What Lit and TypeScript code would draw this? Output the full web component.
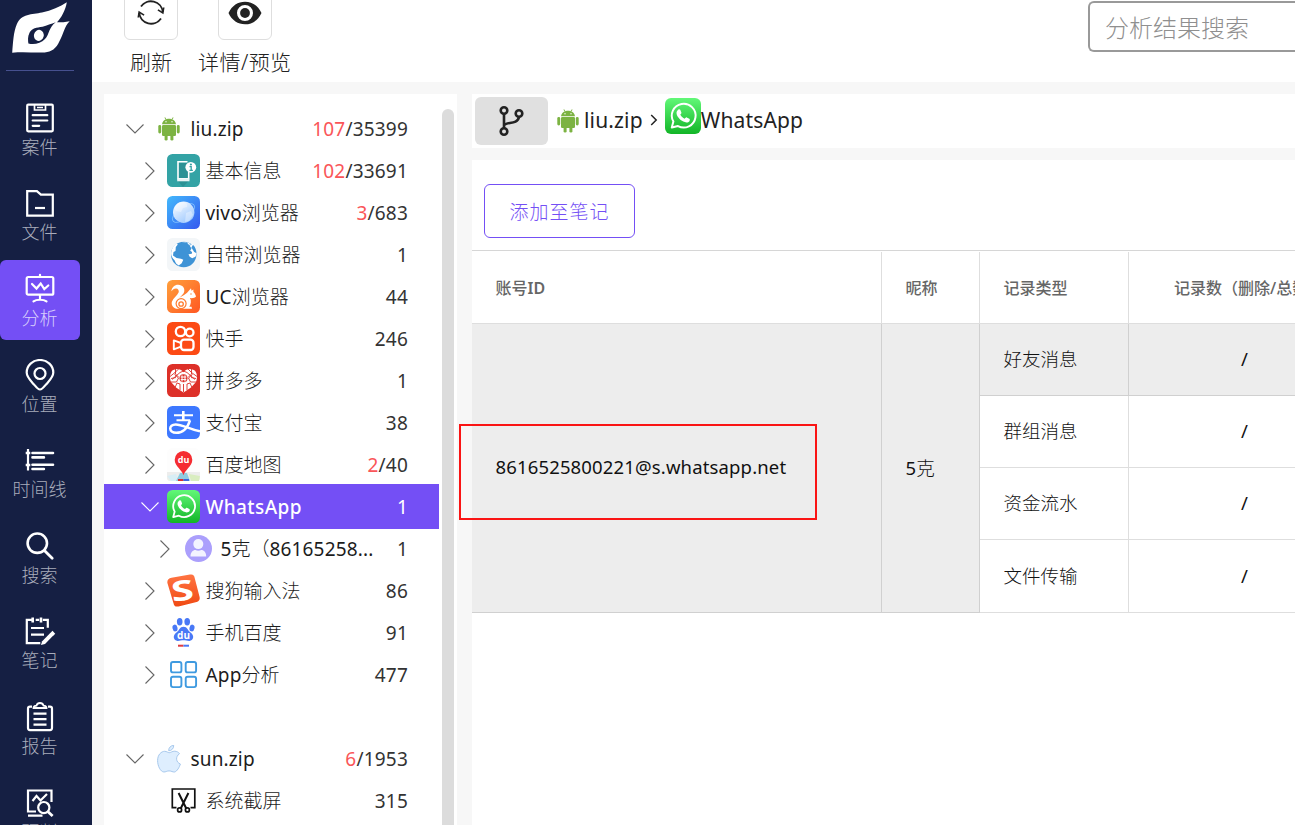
import { LitElement, html, svg, css, nothing } from "lit";
import { customElement } from "lit/decorators.js";
import { classMap } from "lit/directives/class-map.js";

const wrap = (w: number, h: number, vb: string, body: unknown) =>
  html`<svg width=${w} height=${h} viewBox=${vb} fill="none">${body}</svg>`;

// Han characters are set light, Latin letters and digits regular.
const mixed = (t: string) =>
  t.split(/([\x20-\x7e]+)/).filter(Boolean).map((p) => (/^[\x20-\x7e]/.test(p) ? html`<span class="latin">${p}</span>` : p));

const android = () => wrap(22, 24, "0 0 22 24", svg`<g fill="#7cb342"><path d="M4 7.2C4.300 4.600 6.200 3.100 7.700 2.500L6.400.7l.7-.5 1.400 2c1.600-.5 3.400-.5 5 0l1.400-2 .7.5-1.300 1.800C15.900 3.100 17.700 4.600 18 7.200z"/><rect x="4" y="8" width="14" height="11" rx="1.200"/><rect x=".3" y="8" width="2.900" height="8.500" rx="1.400"/><rect x="18.800" y="8" width="2.900" height="8.500" rx="1.400"/><rect x="6.600" y="17" width="3" height="6.600" rx="1.400"/><rect x="12.400" y="17" width="3" height="6.600" rx="1.400"/></g><circle cx="8" cy="4.800" r=".7" fill="#fff"/><circle cx="14" cy="4.800" r=".7" fill="#fff"/>`);

const apple = () => wrap(24, 28, "0 0 24 28", svg`<g fill="#deeefe" stroke="#9fc3ea" stroke-width=".9"><path d="M12.200 7.700c1.600-.1 3.100-1.600 5.600-1.500 2.100.1 3.700 1 4.700 2.500-4.300 2.800-3.700 8.600.9 10.300-.9 2.900-3.300 7.500-5.900 8-2 .2-2.900-1.100-5.400-1.100s-3.300 1.200-5.200 1.100C3.500 26.800.6 21 .6 15.600c0-6 3.700-9.200 7-9.300 2.100 0 3.400 1.400 4.600 1.400z"/><path d="M11.700 5.800c-.3-2.900 2-5.200 5-5.500.2 2.900-1.900 5.400-5 5.500z"/></g>`);

const whatsapp = (s: number) => wrap(s, s, "0 0 33 33", svg`<defs><linearGradient id="wa" x2="0" y2="1"><stop stop-color="#62f878"/><stop offset="1" stop-color="#12b527"/></linearGradient></defs><rect width="33" height="33" rx="5.500" fill="url(#wa)"/><path d="M6.200 27.100l1.500-5.500a10.900 10.900 0 1 1 4.200 4.100z" stroke="#fff" stroke-width="1.800" stroke-linejoin="round"/><path d="M12.300 10.600c.5-.5 1.400-.5 1.700.2l1 2.400c.2.500-.1 1-1 2 .9 1.900 2.300 3.100 4.100 3.900.8-1 1.300-1.500 1.800-1.300l2.400 1.200c.7.300.5 1.500.1 2.200-.8 1.100-2.600 1.500-4.200.9-3.700-1.200-6.600-4.200-7.500-7.200-.5-1.700.3-3.300 1.600-4.300z" fill="#fff"/>`);

const icons: Record<string, () => unknown> = {
  android,
  apple,
  whatsapp: () => whatsapp(33),
  info: () => wrap(33, 33, "0 0 33 33", svg`<rect width="33" height="33" rx="5.500" fill="#33a3a5"/><path d="M11 27l5 6 7-7.500V18l-2-9H11z" fill="#2c9295"/><path d="M20.500 7.700H11v17h10.700V18" stroke="#fff" stroke-width="1.600"/><path d="M10.200 24.600h12.300v2.700H10.200z" fill="#e8f5f5"/><circle cx="23.800" cy="13.300" r="5.400" fill="#fff"/><circle cx="23.900" cy="10.500" r="1.100" fill="#33a3a5"/><path d="M22.500 12.600h1.700v3.600m-1.800.1h3.500" stroke="#33a3a5" stroke-width="1.300"/>`),
  vivo: () => wrap(33, 33, "0 0 33 33", svg`<defs><linearGradient id="vv" x2="1" y2="1"><stop stop-color="#42b9fc"/><stop offset="1" stop-color="#3659ef"/></linearGradient><linearGradient id="vp" x2=".7" y2="1"><stop stop-color="#fff"/><stop offset="1" stop-color="#9ec9ff"/></linearGradient></defs><rect width="33" height="33" rx="5.500" fill="url(#vv)"/><ellipse cx="16.500" cy="17" rx="13.300" ry="6" transform="rotate(-38 16.500 17)" stroke="#86c4ff" stroke-width=".8"/><circle cx="16.700" cy="16.300" r="10.700" fill="url(#vp)"/><path d="M15 6c4 0 6 2 5 5l-4 1-2 4-5-1-2-3c1-3 4-6 8-6zM19 17l5-2 2 4-4 6-4 1z" fill="#fff" opacity=".35"/>`),
  globe: () => wrap(33, 33, "0 0 33 33", svg`<rect width="33" height="33" rx="5.500" fill="#f3f6f8"/><circle cx="16.700" cy="16.500" r="12.700" fill="#3e93d6"/><path d="M4.200 14.200c.6-3.600 2.500-6.700 5.300-8.600l1.300 1-2 2.400-.3 4-2 1-.5 3.500 3.600 2.500 4.400.8 2.300 1-1.600 3.500-3 2.300-2.600-2-1.700-3.700C5 20 3.800 17 4.200 14.200zM14.500 3.900c3.600-.4 6.800.4 9.300 2.400l-1.200 1.200 1.900 3-1.300 2.300 1.900 1.200-.3 1.800-3.300.4 1.200 2.600 2.500 1.400 3.200-1.400c.6-1.400 1-2.700 1.100-4.200.3-3.300-1.400-6.700-4-8.800l-1.900 1.500-2.400-1-1.100-1.800z" fill="#fff"/><path d="M26 6.800c2.300 2.200 3.500 5.300 3.400 8.500l-2.400-1.500-2.600-4.400z" fill="#3e93d6"/>`),
  uc: () => wrap(33, 33, "0 0 33 33", svg`<defs><linearGradient id="uc" x2="1" y2="1"><stop stop-color="#ffa03b"/><stop offset="1" stop-color="#ff5722"/></linearGradient></defs><rect width="33" height="33" rx="5.500" fill="url(#uc)"/><path d="M4.300 11.300C4.800 7 8 4.500 11.300 4.700c4.200.3 6.500 3 6 6.600-.4 2.700-3 4.700-5.200 6.600 3.500-2.300 6-3 8-5.100l3.900-4.500.5 2.500 1.900-1.200v2.400c1.300 1 2.200 2.700 2.600 4.400-1 1.500-3.500 2-6 1.600 1.500 2.500 1 6.500-.7 8.700h2.200l.5 2H9.200C5.500 27.600 4 24.300 5 21.500c1.300-3.400 5.500-6.200 6.700-9.300.5-2-.7-3.700-2.600-3.800-2-.1-3.300 1-4.800 2.900z" fill="#fff"/><circle cx="14.100" cy="23.600" r="5" stroke="#ff7a2c" stroke-width="1.200"/><circle cx="14.100" cy="24" r="2.200" stroke="#ff7a2c" stroke-width="1.300"/><circle cx="24" cy="14" r=".7" fill="#ff7a2c"/>`),
  kuaishou: () => wrap(33, 33, "0 0 33 33", svg`<rect width="33" height="33" rx="5.500" fill="#fc4a14"/><g stroke="#fff" stroke-width="2.300" stroke-linejoin="round"><circle cx="13.500" cy="9.500" r="4.700"/><circle cx="22.700" cy="10.500" r="3.800"/><rect x="14" y="17.700" width="12.500" height="10.300" rx="3"/><path d="M14 21l-7.200-2.600v8.900l7.200-2.700" stroke-width="1.900"/></g>`),
  pdd: () => wrap(33, 33, "0 0 33 33", svg`<rect width="33" height="33" rx="5.500" fill="#dd3028"/><path d="M16.500 8.200C13 3.600 7 4.500 4.600 7.300 2.500 10 2.800 15.300 4 18l5 5.500 7.500 5 7.500-5 5-5.500c1.300-2.700 1.500-8-.6-10.700C26 4.500 20 3.600 16.500 8.200z" fill="#fff"/><path d="M3 12.500l5-4 4-4m-7 11l8-7 3.500-1.500 3.500 1.500 8 7M20.500 4.500l4 4 5.500 4M3.500 18h6l2-4-4-3.500M29.500 18h-6l-2-4 4-3.500M8 23.500l2-4.500 3 1v6M25 23.500L23 19l-3 1v6M16.500 20v8M8.500 5v5l3.500 3.500M24.500 5v5L21 13.500M4 14.500l5-1M29 14.500l-5-1" stroke="#dd3028" stroke-width=".9"/><circle cx="16.500" cy="14.300" r="4" fill="#dd3028"/><path d="M13.700 13h5.600m-5.600 2.600h5.600m-4.300-4.300v6.300m3-6.300v6.300" stroke="#fff" stroke-width="1"/>`),
  alipay: () => wrap(33, 33, "0 0 33 33", svg`<rect width="33" height="33" rx="5.500" fill="#3d78ff"/><g stroke="#fff"><path d="M7 9.200h19M9.500 14.300h13.700" stroke-width="1.900"/><path d="M16.300 5v9" stroke-width="2.600"/><path d="M23 14.300C20.500 22 15.500 26.800 9.300 26.800c-8 0-8-8.300-.6-8.300C15 18.500 22 23 33 25.300" stroke-width="2.500"/></g>`),
  bmap: () => wrap(33, 33, "0 0 33 33", svg`<rect width="33" height="33" rx="5.500" fill="#fdfdfd"/><path d="M0 24h33v6q0 3-3 3H3q-3 0-3-3z" fill="#ededec"/><path d="M0 28l9-2 3 7H4z" fill="#d8eef5"/><path d="M22 26l11 2-1 5h-8z" fill="#d9edc0"/><path d="M13 25h7l3 8H9z" fill="#8fcbe0"/><path d="M11 31h5.500v2H11z" fill="#d92c30"/><path d="M16.500 31H22v2h-5.500z" fill="#3a66dd"/><path d="M16.500 27.300C15.500 22 7.700 18.500 7.700 11.700a8.800 8.800 0 0 1 17.600 0c0 6.800-7.800 10.300-8.800 15.600z" fill="#f52c31"/><text x="16.500" y="15" fill="#fff" font-size="9" font-weight="700" font-family="Open Sans" text-anchor="middle">du</text>`),
  user: () => wrap(27, 27, "0 0 27 27", svg`<circle cx="13.500" cy="13.500" r="13.500" fill="#ab9ffc"/><circle cx="13.300" cy="9.100" r="5" fill="#f3f3ff"/><path d="M5.500 21.500c0-4.200 2.200-6.600 5-6.600 1.600 1 4 1 5.700 0 2.900 0 5 2.400 5 6.600z" fill="#f3f3ff"/>`),
  sogou: () => wrap(33, 33, "0 0 33 33", svg`<defs><linearGradient id="sg" x2="0" y2="1"><stop stop-color="#ff7443"/><stop offset="1" stop-color="#f04a13"/></linearGradient></defs><path d="M4.500 3.800L23 .5c3-.5 4.300.6 4.700 3.500L32.600 23c.5 2.500-.4 4.200-3 5L11.500 32.400c-3 .6-4.500-.5-5-3.200L.4 9C0 6 1.500 4.400 4.500 3.800z" fill="url(#sg)"/><text transform="translate(16.500 26.300) rotate(-7) scale(1.450 1)" fill="#fff" font-size="28" font-weight="700" font-family="Open Sans" text-anchor="middle">S</text>`),
  baidu: () => wrap(33, 33, "0 0 33 33", svg`<g fill="#4878f6"><ellipse cx="12.700" cy="5.700" rx="2.800" ry="3.700"/><ellipse cx="20.200" cy="5.700" rx="2.800" ry="3.700"/><ellipse cx="8" cy="12" rx="2.500" ry="3.400" transform="rotate(-12 8 12)"/><ellipse cx="25" cy="12" rx="2.500" ry="3.400" transform="rotate(12 25 12)"/><path d="M16.500 10.700c4 0 4 3.300 6.500 5.300 5.500 4 3 8.700-.5 8.900-2 .1-4-.7-6-.7s-4 .8-6 .7c-3.500-.2-6-4.900-.5-8.900 2.500-2 2.500-5.300 6.500-5.300z"/></g><text x="16.500" y="23.300" fill="#fff" font-size="10" font-weight="700" font-family="Open Sans" text-anchor="middle">du</text><path d="M11 29.700h5.500" stroke="#e03a3f" stroke-width="2"/><path d="M16.500 29.700H22" stroke="#4878f6" stroke-width="2"/>`),
  apps: () => wrap(33, 33, "0 0 33 33", svg`<g stroke="#3e9ae0" stroke-width="1.900"><rect x="4" y="4" width="10.400" height="10.400" rx="2"/><rect x="18.700" y="4" width="10.400" height="10.400" rx="2"/><rect x="4" y="18.700" width="10.400" height="10.400" rx="2"/><rect x="18.700" y="18.700" width="10.400" height="10.400" rx="2"/></g>`),
  shot: () => wrap(33, 33, "0 0 33 33", svg`<g stroke="#111" stroke-width="1.700"><path d="M9.500 23.700H5.300V5h22.500v18.700h-4.300"/><path d="M11.600 9l7.700 15.500M21.400 9l-7.700 15.500" stroke-width="2"/><circle cx="12.600" cy="25.900" r="2"/><circle cx="20.400" cy="25.900" r="2"/></g>`),
};

const navIcons: Record<string, unknown> = {
  case: svg`<rect x="3.200" y="2.700" width="25.600" height="26.600" rx="1"/><path d="M10.500 3v5h11V3M13 5.500h6" stroke-width="1.700"/><path d="M8.700 13.200h14.600M8.700 18.500h14.600M8.700 23.800h6.500" stroke-linecap="round"/>`,
  file: svg`<path d="M3.200 4.200h9.700l4 3.500h11.900v20.900H3.200z"/><path d="M11 21h10"/>`,
  analysis: svg`<rect x="2.700" y="4" width="26.600" height="17.700" rx="1.500"/><path d="M16 1.800V4M16 22v4.600M9.500 28.400c3-2.200 10-2.200 13 0M8 11l4.500 4.500 4.200-5 3.600 5.500 4-3.500" stroke-linecap="round" />`,
  place: svg`<path d="M16 30.500c-2 0-3.700-2.200-6-5C6 21 2.700 18 2.700 13.500a13.300 12.500 0 0 1 26.600 0C29.300 18 26 21 22 25.500c-2.300 2.800-4 5-6 5z"/><circle cx="16" cy="14.500" r="5.500"/>`,
  time: svg`<path d="M4 5v21.500"/><path d="M1.700 9h4.600M1.700 21h4.600" stroke-width="2.400"/><path d="M8.500 9H29M8.500 20.800H29" stroke-linecap="round" stroke-width="2.600"/><path d="M8.500 13.400h11.400M8.500 25h11.400" stroke-linecap="round" stroke-width="2.600"/>`,
  search: svg`<circle cx="13.300" cy="13.200" r="9.700" stroke-width="2.600"/><path d="M20.400 20.400l7.800 7.800" stroke-width="2.800" stroke-linecap="round"/>`,
  note: svg`<path d="M8.300 4.800H2.800v23.400h13.500M11.700 4.800h3.500M18.800 4.800h5v8" /><path d="M8.700 2.500v5M17 2.500v5" stroke-width="2.600"/><path d="M7 13h13M7 19.700h13"/><path d="M18.200 26.200l8.300-8.400 2.800 2.800-8.300 8.300-4.100 1.200z" fill="#fff" stroke="none"/><path d="M27.300 17l2.800 2.800" stroke-width="3.200"/>`,
  report: svg`<path d="M8 5.700H6a2 2 0 0 0-2 2v19.400a2 2 0 0 0 2 2h20a2 2 0 0 0 2-2V7.700a2 2 0 0 0-2-2h-2" /><path d="M9.500 7h13c0-1.700-1.500-2.300-3-2.400-.5-1.600-1.700-2.600-3.500-2.600s-3 1-3.500 2.600c-1.500.1-3 .7-3 2.400z" stroke-width="1.800"/><path d="M9.500 12.700h13M9.500 18.200h13M9.500 23.700h13"/>`,
  data: svg`<path d="M12 24.500H4V3.500h23.500V15" /><path d="M4 28.700h14.500M8.500 14l4-5 4 4.500 6.500-6.500" /><circle cx="19.800" cy="20.600" r="5.600"/><path d="M24 24.700l4.600 4.300" stroke-width="2.800"/>`,
};

@customElement("nav-rail")
class NavRail extends LitElement {
  static styles = css`
    :host { display: flex; flex-direction: column; width: 92px; height: 825px; overflow: hidden; background: #151f43; flex: none; box-sizing: border-box; }
    .logo { height: 71px; flex: none; box-sizing: border-box; border-bottom: 1px solid #46508f; margin: 0 18px 0 6px; padding-top: 1px; }
    .logo svg { display: block; margin-left: 6px; }
    .list { display: flex; flex-direction: column; gap: 5.6px; padding-top: 17.800px; }
    .item { flex: none; width: 80px; height: 80px; border-radius: 6px; display: flex; flex-direction: column; align-items: center; color: #a9adbb; font-size: 18px; font-weight: 300; box-sizing: border-box; padding-top: 13px; }
    .item.on { background: #744ff5; color: #d8cefc; }
    .item svg { display: block; flex: none; }
    .label { line-height: 26px; padding-right: 1px; }
  `;
  render() {
    const items = [["case", "案件"], ["file", "文件"], ["analysis", "分析"], ["place", "位置"], ["time", "时间线"], ["search", "搜索"], ["note", "笔记"], ["report", "报告"], ["data", "研判"]];
    return html`
      <div class="logo">${wrap(60, 60, "0 0 60 60", svg`<path fill="#fff" fill-rule="evenodd" d="M.2 51.800C1 42 1.500 31 4.700 23.600 9 12.500 20 13.500 30 11.500 39.500 9.500 48 6 54.800 1.300c-.6 4-1.900 7.700-3.800 11.100-2 4-3.500 6-6 8.900 4.200 0 8.500-.2 12.700-1.100-5.500 5.400-6.200 12.600-9.900 19.200C44 48 39.500 50.600 32.800 51.400c-10 .6-21.800-.8-32.600.4zM43.700 21.200c-4.500 1.500-8.700 3.300-13.200 4.500-6 1-10.500 1.300-13 6-2 4-1.500 8-1.100 10.700 5 1.500 12.300.4 16.600-4.300 4.500-5 3.500-11.500 10.700-16.900z"/><ellipse cx="26.800" cy="34.400" rx="4.900" ry="5.600" transform="rotate(15 26.800 34.400)" fill="#fff"/>`)}</div>
      <div class="list">
        ${items.map(([k, t]) => html`<div class=${classMap({ item: true, on: k === "analysis" })}>
          <svg width="32" height="32" viewBox="0 0 32 32" fill="none" stroke="#fff" stroke-width="2.200">${navIcons[k]}</svg>
          <div class="label">${t}</div>
        </div>`)}
      </div>`;
  }
}

type Row = { l: number; icon: string; t: string; hit?: string; n: string; open?: boolean; on?: boolean; leaf?: boolean };
const rows: (Row | null)[] = [
  { l: 0, icon: "android", t: "liu.zip", hit: "107", n: "35399", open: true },
  { l: 1, icon: "info", t: "基本信息", hit: "102", n: "33691" },
  { l: 1, icon: "vivo", t: "vivo浏览器", hit: "3", n: "683" },
  { l: 1, icon: "globe", t: "自带浏览器", n: "1" },
  { l: 1, icon: "uc", t: "UC浏览器", n: "44" },
  { l: 1, icon: "kuaishou", t: "快手", n: "246" },
  { l: 1, icon: "pdd", t: "拼多多", n: "1" },
  { l: 1, icon: "alipay", t: "支付宝", n: "38" },
  { l: 1, icon: "bmap", t: "百度地图", hit: "2", n: "40" },
  { l: 1, icon: "whatsapp", t: "WhatsApp", n: "1", open: true, on: true },
  { l: 2, icon: "user", t: "5克（86165258...", n: "1" },
  { l: 1, icon: "sogou", t: "搜狗输入法", n: "86" },
  { l: 1, icon: "baidu", t: "手机百度", n: "91" },
  { l: 1, icon: "apps", t: "App分析", n: "477" },
  null,
  { l: 0, icon: "apple", t: "sun.zip", hit: "6", n: "1953", open: true },
  { l: 1, icon: "shot", t: "系统截屏", n: "315", leaf: true },
];

@customElement("source-tree")
class SourceTree extends LitElement {
  static styles = css`
    :host { display: flex; width: 353px; flex: none; height: 731px; background: #fff; overflow: hidden; }
    .rows { width: 335px; padding-top: 14px; flex: none; }
    .row { height: 42px; display: flex; align-items: center; padding-right: 31px; font-size: 19px; color: #1c1c1c; white-space: nowrap; box-sizing: border-box; }
    .row.on { height: 45px; margin: -2px 0 -1px; background: #744ff5; color: #fff; }
    .l0 { padding-left: 22px; }
    .l1 { padding-left: 36px; }
    .l2 { padding-left: 52px; }
    .chev { width: 18px; flex: none; display: flex; justify-content: center; }
    .l1 .chev { padding-left: 1px; margin-right: -1px; }
    .icon { display: flex; justify-content: center; flex: none; }
    .l0 .icon { width: 24px; margin: 0 9.500px 0 13px; }
    .l1 .icon { width: 33px; margin: 0 5.500px 1px 9px; }
    .l2 .icon { width: 27px; margin: 0 8.500px 1px 11px; }
    .name { flex: 1; line-height: 28px; font-weight: 300; }
    .latin { font-weight: 400; letter-spacing: 0.15px; }
    .on .latin { font-weight: 500; letter-spacing: 0.4px; }
    .num { letter-spacing: 0.2px; font-weight: 400; color: #333; }
    .on .num { color: #fff; }
    .hit { color: #fa5558; }
    .track { margin: 15px 3px 0; width: 12px; height: 740px; border-radius: 6px; background: #dcdcdc; }
  `;
  chev(r: Row) {
    if (r.leaf) return nothing;
    const c = r.on ? "#fff" : "#666";
    return r.open
      ? html`<svg width="18" height="12" viewBox="0 0 18 12" fill="none" stroke=${c} stroke-width="1.100"><path d="M.5 1.500L9 10l8.500-8.500"/></svg>`
      : html`<svg width="12" height="18" viewBox="0 0 12 18" fill="none" stroke=${c} stroke-width="1.100"><path d="M1.500.5L10 9l-8.500 8.500"/></svg>`;
  }
  render() {
    return html`<div class="rows">
        ${rows.map((r) => r === null ? html`<div class="row"></div>` : html`
          <div class=${classMap({ row: true, on: !!r.on, ["l" + r.l]: true })}>
            <span class="chev">${this.chev(r)}</span>
            <span class="icon">${icons[r.icon]()}</span>
            <span class="name">${mixed(r.t)}</span>
            <span class="num">${r.hit ? html`<span class="hit">${r.hit}</span>/` : nothing}${r.n}</span>
          </div>`)}
      </div>
      <div class="track"></div>`;
  }
}

@customElement("record-table")
class RecordTable extends LitElement {
  static styles = css`
    :host { display: block; overflow: hidden; }
    .grid { display: grid; grid-template-columns: 410px 98px 149px 232px; grid-template-rows: 72px 72px 72px 72px 73px; border-top: 1px solid #d6d6d6; padding-top: 1px; width: 889px; }
    .cell { border-right: 1px solid #dedede; border-bottom: 1px solid #dedede; padding: 0 0 3px 23.500px; display: flex; align-items: center; font-size: 18.500px; font-weight: 300; color: #111; box-sizing: border-box; white-space: nowrap; }
    .head { font-size: 16px; font-weight: 500; color: #666; padding-bottom: 1px; }
    .head .latin { font-weight: 600; }
    .latin { font-weight: 400; letter-spacing: 0.15px; }
    .tall { grid-row: 2 / 6; }
    .hot { background: #ededed; border-color: #d0d0d0; }
    .mid { justify-content: center; padding: 0 0 2px; }
    .count { padding-left: 45px; }
  `;
  render() {
    const kinds = ["好友消息", "群组消息", "资金流水", "文件传输"];
    return html`<div class="grid">
      <div class="cell head"><span>账号<span class="latin">ID</span></span></div><div class="cell head">昵称</div>
      <div class="cell head">记录类型</div><div class="cell head count">记录数（删除/总数）</div>
      <div class="cell tall hot"><span class="latin">8616525800221@s.whatsapp.net</span></div>
      <div class="cell tall hot"><span>${mixed("5克")}</span></div>
      ${kinds.map((k, i) => html`<div class=${classMap({ cell: true, hot: i === 0 })}>${k}</div>
        <div class=${classMap({ cell: true, mid: true, hot: i === 0 })}><span class="latin">/</span></div>`)}
    </div>`;
  }
}

@customElement("app-root")
class AppRoot extends LitElement {
  static styles = css`
    :host { display: flex; position: relative; width: 1295px; height: 825px; overflow: hidden; background: #f7f7f7; font-family: "Noto Sans", "Noto Sans CJK SC", sans-serif; color: #222; }
    .main { flex: 1; min-width: 0; display: flex; flex-direction: column; }
    .bar { height: 82px; flex: none; background: #fff; display: flex; justify-content: space-between; overflow: hidden; }
    .tools { display: flex; align-items: flex-end; padding: 0 0 5px 32px; gap: 20px; }
    .tool { display: flex; flex-direction: column; align-items: center; font-size: 21px; font-weight: 300; }
    .tool .wide { letter-spacing: 0.45px; }
    .box { width: 54px; height: 54px; box-sizing: border-box; border: 1px solid #dedede; border-radius: 6px; display: flex; justify-content: center; align-items: center; }
    .text { line-height: 30px; margin-top: 7px; white-space: nowrap; }
    .search { margin-top: 1px; width: 207px; height: 51px; box-sizing: border-box; border: 2px solid #999; border-right: 0; border-radius: 6px 0 0 6px; padding-left: 15px; line-height: 49px; font-size: 24px; font-weight: 300; color: #8f8f8f; }
    .body { display: flex; padding: 12px 0 0 12px; gap: 15px; }
    .right { flex: 1; min-width: 0; display: flex; flex-direction: column; gap: 12px; }
    .crumbs { height: 54px; background: #fff; display: flex; align-items: center; padding-left: 3px; font-size: 21px; box-sizing: border-box; }
    .crumbs .word { padding-bottom: 2px; letter-spacing: 0.15px; }
    .branch { width: 73px; height: 48px; border-radius: 6px; background: #e0e0e0; display: flex; justify-content: center; align-items: center; margin-right: 9px; }
    .branch svg { margin-bottom: 1px; }
    .crumbs .zip { margin-left: 5px; }
    .sep { margin: 0 6.500px 2px 7.500px; display: flex; }
    .wa { display: flex; margin-top: -10px; }
    .panel { height: 665px; background: #fff; display: flex; flex-direction: column; }
    .add { width: 151px; height: 54px; box-sizing: border-box; border: 1px solid #744ff5; border-radius: 6px; color: #744ff5; font-size: 19px; font-weight: 300; letter-spacing: 1px; display: flex; align-items: center; justify-content: center; margin: 24px 0 12px 12px; flex: none; }
    .mark { position: absolute; left: 459px; top: 424px; width: 358px; height: 96px; box-sizing: border-box; border: 2px solid #fa1414; }
  `;
  render() {
    return html`
      <nav-rail></nav-rail>
      <div class="main">
        <div class="bar">
          <div class="tools">
            <div class="tool"><div class="box">${wrap(30, 30, "0 0 30 30", svg`<g stroke="#222" stroke-width="1.900"><path d="M5 8.500A12 12 0 0 1 26.800 14M25 20.500A12 12 0 0 1 3.200 15" /><path d="M27.800 9.500l-.9 5.500-5-3.200M2.200 19.500l.9-5.500 5 3.200" stroke-width="1.500"/></g>`)}</div><div class="text">刷新</div></div>
            <div class="tool"><div class="box">${wrap(34, 24, "0 0 34 24", svg`<path fill="#222" fill-rule="evenodd" d="M.5 12C4 4.500 10 .7 17 .7S30 4.500 33.500 12C30 19.500 24 23.300 17 23.300S4 19.500.5 12zM17 4a8 8 0 1 0 0 16 8 8 0 0 0 0-16z"/><circle cx="17" cy="12" r="4.900" fill="#222"/>`)}</div><div class="text wide">详情/预览</div></div>
          </div>
          <div class="search">分析结果搜索</div>
        </div>
        <div class="body">
          <source-tree></source-tree>
          <div class="right">
            <div class="crumbs">
              <div class="branch">${wrap(26, 32, "0 0 26 32", svg`<g stroke="#222" stroke-width="2.600"><circle cx="5" cy="5.500" r="3.300"/><circle cx="5" cy="26.500" r="3.300"/><circle cx="20" cy="8.500" r="3.300"/><path d="M5 9v14M5 20.500c2-4 13.500-.5 15-8.500"/></g>`)}</div>
              ${android()}<span class="word zip">liu.zip</span>
              <span class="sep">${wrap(8, 12, "0 0 8 12", svg`<path d="M1.200 1l5 5-5 5" stroke="#222" stroke-width="1.500"/>`)}</span>
              <span class="wa">${whatsapp(36)}</span><span class="word">WhatsApp</span>
            </div>
            <div class="panel">
              <div class="add">添加至笔记</div>
              <record-table></record-table>
            </div>
          </div>
        </div>
      </div>
      <div class="mark"></div>`;
  }
}
